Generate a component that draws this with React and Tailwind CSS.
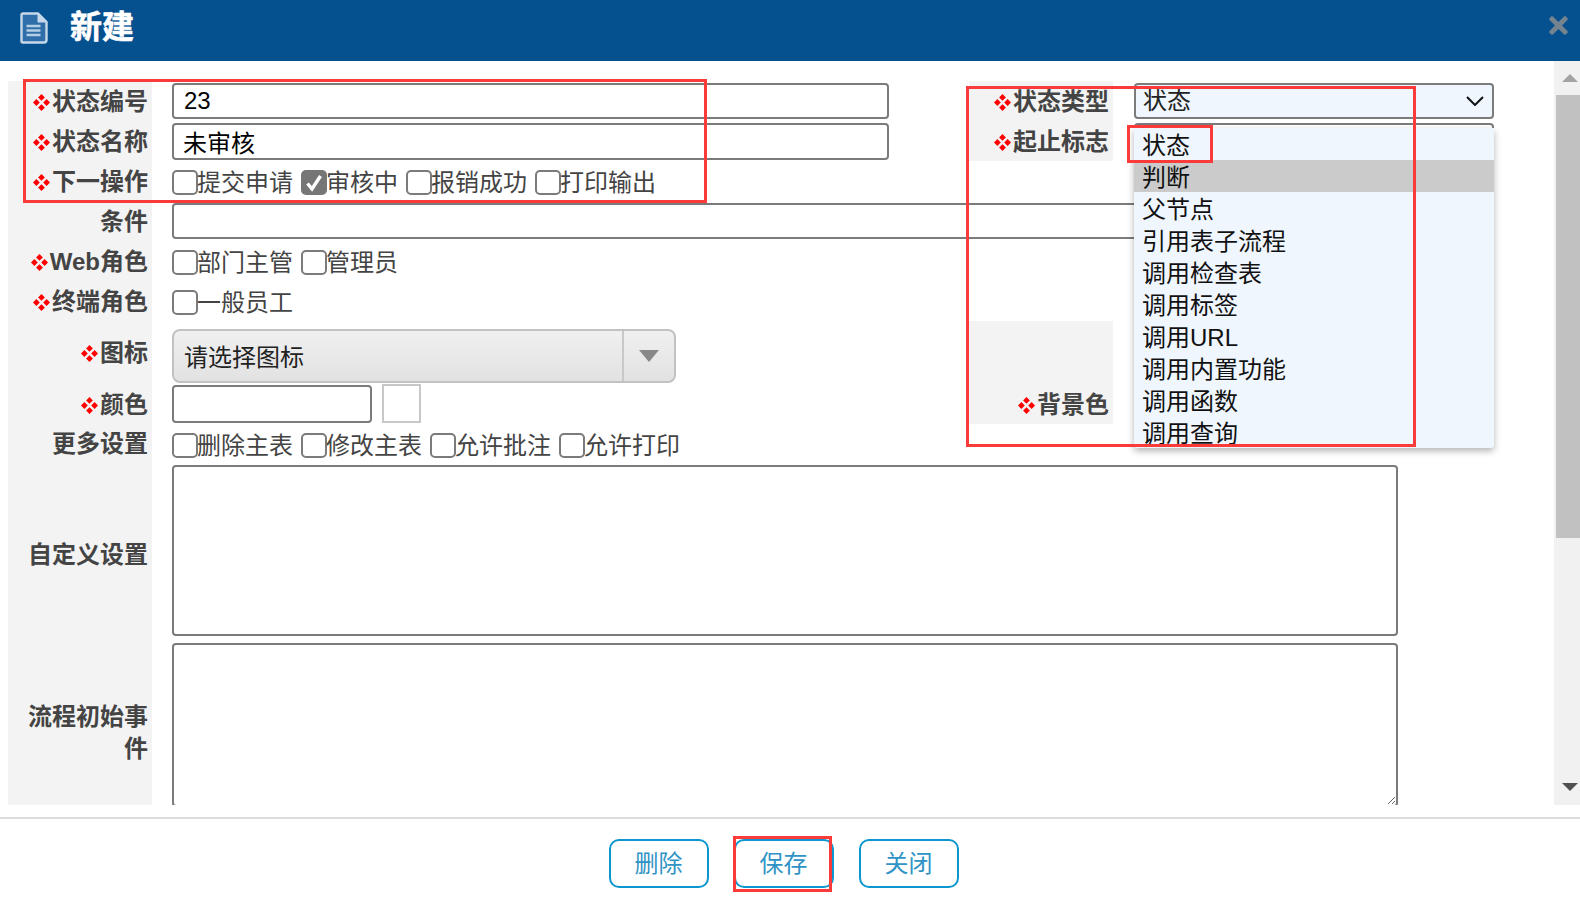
import { FaTimes } from 'react-icons/fa';

const FONT = 'font-["Liberation_Sans","Noto_Sans_CJK_SC",sans-serif]';

const typeOptions = ['状态', '判断', '父节点', '引用表子流程', '调用检查表', '调用标签', '调用URL', '调用内置功能', '调用函数', '调用查询'];

function Diamonds() {
  return (
    <svg viewBox="0 0 17 17" className="inline-block w-[17px] h-[17px] mr-[2px] align-[-1px]" fill="#f00">
      <path d="M8.5 0l3.4 3.4-3.4 3.4-3.4-3.4z" />
      <path d="M3.4 5.1l3.4 3.4-3.4 3.4L0 8.5z" />
      <path d="M13.6 5.1L17 8.5l-3.4 3.4-3.4-3.4z" />
      <path d="M8.5 10.2l3.4 3.4-3.4 3.4-3.4-3.4z" />
    </svg>
  );
}

function Label({ text, required, pad = 'pt-[2px]', className = '' }) {
  return (
    <div className={`w-[144px] shrink-0 self-stretch bg-[#f3f3f3] pr-[4px] flex items-center justify-end text-right text-[24px] leading-[32px] font-bold text-[#444] ${pad} ${className}`}>
      <span>
        {required && <Diamonds />}
        {text}
      </span>
    </div>
  );
}

function Check({ text, checked }) {
  return (
    <div className="flex items-center text-[24px] leading-[30px] text-[#444]">
      {checked ? (
        <span className="w-[26px] h-[25px] mt-[3px] rounded-[5px] bg-[#767676] flex items-center justify-center">
          <svg viewBox="0 0 20 20" className="w-[20px] h-[20px]" fill="none" stroke="#fff" strokeWidth="3.4">
            <path d="M3.5 10.5 8 16 16.5 3" />
          </svg>
        </span>
      ) : (
        <span className="w-[26px] h-[25px] mt-[3px] rounded-[5px] border-2 border-[#7b7b7b] bg-white" />
      )}
      <span className="pt-[4px] -ml-[1px]">{text}</span>
    </div>
  );
}

function Checks({ items, className = '' }) {
  return (
    <div className={`ml-[20px] flex gap-[8px] ${className}`}>
      {items.map((item) => (
        <Check key={item} text={item} checked={item === '审核中'} />
      ))}
    </div>
  );
}

function Input({ value, className = '' }) {
  return (
    <input
      readOnly
      value={value || ''}
      className={`block h-[36px] bg-white border-2 border-[#7b7b7b] rounded-[4px] px-[10px] text-[24px] text-black outline-none ${className}`}
    />
  );
}

function Marker({ className }) {
  return <div className={`absolute border-[3px] border-[#fb3a3a] pointer-events-none ${className}`} />;
}

export default function App() {
  return (
    <div className={`relative w-[1580px] h-[904px] overflow-hidden bg-white flex flex-col ${FONT}`}>
      {/* Header */}
      <div className="h-[61px] shrink-0 bg-[#05508f] flex items-center pl-[20px] pr-[8px]">
        <svg viewBox="0 0 28 32" className="w-[28px] h-[32px] mb-[6px]">
          <path d="M3 1.5h15l8.5 8.5v18a2.5 2.5 0 0 1-2.5 2.5H3A1.5 1.5 0 0 1 1.5 29V3A1.5 1.5 0 0 1 3 1.5Z" fill="#2f6ea8" stroke="#c5d9ea" strokeWidth="2.4" />
          <path d="M18 2v8h8" fill="#c5d9ea" stroke="#c5d9ea" strokeWidth="1" />
          <path d="M6.5 14h14M6.5 18.5h14M6.5 23h14" stroke="#b3cde3" strokeWidth="2.4" />
        </svg>
        <div className="ml-[22px] mb-[8px] text-[32px] leading-[40px] font-bold text-white [-webkit-text-stroke:0.6px_white]">新建</div>
        <FaTimes className="ml-auto mb-[11px] w-[27px] h-[27px] text-[#75838f]" />
      </div>

      {/* Body */}
      <div className="h-[744px] shrink-0 flex">
        <div className="w-[1554px] overflow-hidden pt-[20px] pl-[8px]">
          <div className="flex h-[40px] items-center">
            <Label text="状态编号" required />
            <Input value="23" className="ml-[20px] w-[717px]" />
            <Label text="状态类型" required className="ml-[80px]" />
            <div className="relative ml-[21px] w-[360px]">
              <div className="h-[36px] bg-[#eff6fd] border-2 border-[#7b7b7b] rounded-[4px] pl-[7px] pr-[8px] flex items-center justify-between text-[24px] text-[#222]">
                <span className="-mt-[1px]">状态</span>
                <svg viewBox="0 0 18 10" className="w-[18px] h-[10px]" fill="none" stroke="#111" strokeWidth="2">
                  <path d="M1 1l8 8 8-8" />
                </svg>
              </div>
              {/* Open option list */}
              <div className="absolute z-10 left-0 top-[45px] w-[360px] h-[320px] overflow-hidden bg-[#eff6fd] rounded-b-[3px] shadow-[0_3px_7px_rgba(0,0,0,0.3)]">
                {typeOptions.map((option) => (
                  <div key={option} className={`h-[32px] pl-[8px] text-[24px] leading-[36px] text-[#111] ${option === '判断' ? 'bg-[#cbcbcb]' : ''}`}>
                    {option}
                  </div>
                ))}
              </div>
            </div>
          </div>
          <div className="flex h-[40px] items-center">
            <Label text="状态名称" required />
            <Input value="未审核" className="ml-[20px] w-[717px] h-[37px] pl-[9px]" />
            <Label text="起止标志" required className="ml-[80px]" />
            <Input className="ml-[21px] w-[360px]" />
          </div>
          <div className="flex h-[40px] items-center">
            <Label text="下一操作" required />
            <Checks items={['提交申请', '审核中', '报销成功', '打印输出']} />
          </div>
          <div className="flex h-[40px] items-center">
            <Label text="条件" />
            <Input className="ml-[20px] w-[1322px]" />
          </div>
          <div className="flex h-[40px] items-center">
            <Label text="Web角色" required />
            <Checks items={['部门主管', '管理员']} />
          </div>
          <div className="flex h-[40px] items-center">
            <Label text="终端角色" required />
            <Checks items={['一般员工']} />
          </div>
          <div className="flex h-[62px] items-center">
            <Label text="图标" required />
            <div className="ml-[20px] w-[504px] h-[54px] self-end flex rounded-[8px] border-2 border-[#c2c2c2] bg-gradient-to-b from-[#f0f0f0] to-[#e2e2e3]">
              <div className="flex-1 pl-[10px] pt-[10px] text-[24px] leading-[34px] text-[#222]">请选择图标</div>
              <div className="w-[52px] border-l-2 border-[#c8c8c8] flex items-center justify-center">
                <div className="w-0 h-0 border-x-[10px] border-x-transparent border-t-[12px] border-t-[#888]" />
              </div>
            </div>
            <div className="ml-[293px] w-[144px] self-stretch bg-[#f3f3f3]" />
          </div>
          <div className="flex h-[41px] items-center">
            <Label text="颜色" required />
            <Input className="ml-[20px] w-[200px] h-[38px]" />
            <div className="ml-[10px] w-[39px] h-[39px] border-2 border-[#c8c8c8]" />
            <Label text="背景色" required className="ml-[548px]" />
            <Input className="ml-[21px] w-[360px] h-[38px]" />
          </div>
          <div className="flex h-[37px] items-center">
            <Label text="更多设置" />
            <Checks items={['删除主表', '修改主表', '允许批注', '允许打印']} className="mt-[2px]" />
          </div>
          <div className="flex h-[179px] items-center">
            <Label text="自定义设置" pad="pt-[8px]" />
            <textarea readOnly className="block ml-[20px] w-[1226px] h-[171px] resize-none bg-white border-2 border-[#7b7b7b] rounded-[4px] outline-none" />
          </div>
          <div className="flex h-[184px] items-start">
            <Label text="流程初始事件" />
            <textarea readOnly className="block ml-[20px] mt-[3px] w-[1226px] h-[164px] bg-white border-2 border-[#7b7b7b] rounded-[4px] outline-none" />
          </div>
        </div>

        {/* Scrollbar */}
        <div className="w-[26px] shrink-0 bg-[#f1f1f1] flex flex-col items-center">
          <div className="h-[34px] w-full flex items-center justify-center pl-[6px]">
            <div className="w-0 h-0 border-x-[8px] border-x-transparent border-b-[8px] border-b-[#a3a3a3]" />
          </div>
          <div className="h-[443px] w-[24px] ml-[2px] bg-[#c1c1c1]" />
          <div className="flex-1" />
          <div className="h-[34px] w-full flex items-center justify-center pl-[6px] pb-[2px]">
            <div className="w-0 h-0 border-x-[8px] border-x-transparent border-t-[8px] border-t-[#505050]" />
          </div>
        </div>
      </div>

      {/* Footer */}
      <div className="mt-[12px] border-t-2 border-[#dcdcdc] pt-[20px] pr-[13px] flex justify-center gap-[25px]">
        {['删除', '保存', '关闭'].map((name) => (
          <button key={name} className="w-[100px] h-[49px] rounded-[10px] border-2 border-[#0e97cf] bg-white text-[24px] text-[#2f93c5]">
            {name}
          </button>
        ))}
      </div>

      {/* Red annotation boxes */}
      <Marker className="z-20 left-[23px] top-[79px] w-[684px] h-[124px]" />
      <Marker className="z-20 left-[966px] top-[86px] w-[450px] h-[361px]" />
      <Marker className="z-20 left-[1127px] top-[125px] w-[86px] h-[38px]" />
      <Marker className="z-20 left-[733px] top-[836px] w-[99px] h-[56px]" />
    </div>
  );
}
